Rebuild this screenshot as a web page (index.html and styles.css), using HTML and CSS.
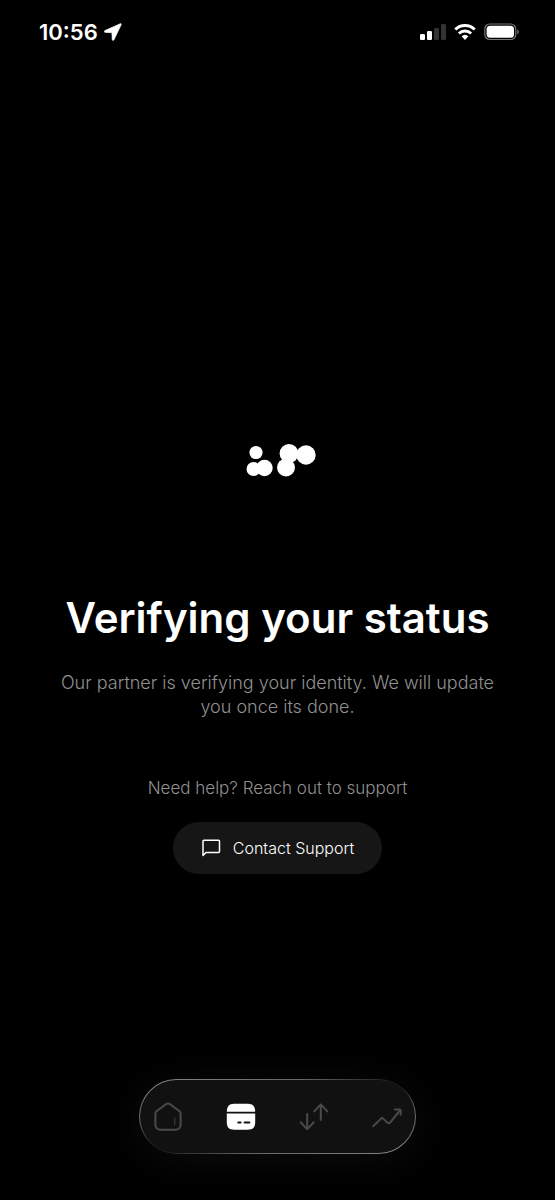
FILE: index.html
```html
<!DOCTYPE html>
<html lang="en">
<head>
  <meta charset="UTF-8">
  <meta name="viewport" content="width=device-width, initial-scale=1">
  <title>Verifying your status</title>
  <link rel="stylesheet" href="styles.css">
</head>
<body>
  <header class="status-bar">
    <div class="time">
      <span>10:56</span>
      <svg width="18" height="18" viewBox="0 0 18 18" fill="#fff" stroke="#fff" stroke-width=".6" aria-hidden="true">
        <path d="M16.2.7.9 7.6c-1 .5-.8 1.700.3 1.800l6.300.3c.3 0 .4.1.4.4l.3 6.400c.1 1.100 1.400 1.300 1.800.3L17.200 1.700c.3-.8-.3-1.300-1-1z"/>
      </svg>
    </div>
    <div class="system">
      <svg width="26" height="18" viewBox="0 0 26 18" aria-hidden="true">
        <rect x="0" y="11" width="5" height="6" rx="1.300" fill="#fff"/>
        <rect x="7" y="8" width="5" height="9" rx="1.300" fill="#fff"/>
        <rect x="14" y="5" width="5" height="12" rx="1.300" fill="#333"/>
        <rect x="21" y="1" width="5" height="16" rx="1.300" fill="#333"/>
      </svg>
      <svg width="22" height="18" viewBox="0 0 22 18" aria-hidden="true">
        <g fill="none" stroke="#fff" stroke-width="3">
          <path d="M1.300 6.500a14 14 0 0 1 19.400 0"/>
          <path d="M4.900 10.500a8.800 8.800 0 0 1 12.200 0"/>
        </g>
        <path d="M7.600 13.300a5 5 0 0 1 6.800 0L11 17z" fill="#fff"/>
      </svg>
      <svg width="36" height="18" viewBox="0 0 36 18" aria-hidden="true">
        <rect x=".8" y="1" width="31" height="15.500" rx="5" fill="none" stroke="#777" stroke-width="1.200"/>
        <rect x="2.600" y="2.800" width="27.400" height="12" rx="3.500" fill="#fff"/>
        <path d="M33.300 6.500c2 .7 2 4 0 4.800z" fill="#777"/>
      </svg>
    </div>
  </header>

  <main class="content">
    <svg class="loader" width="76" height="34" viewBox="-6 0 76 34" fill="#fff" aria-hidden="true">
      <circle cx="10" cy="8.500" r="6.600"/>
      <circle cx="7.500" cy="25" r="7"/>
      <circle cx="18.500" cy="24" r="8.200"/>
      <circle cx="43" cy="9.500" r="9.400"/>
      <circle cx="60" cy="11" r="9.700"/>
      <circle cx="40" cy="23.500" r="9"/>
    </svg>
    <h1>Verifying your status</h1>
    <p class="message">Our partner is verifying your identity. We will update you once its done.</p>
    <p class="help">Need help? Reach out to support</p>
    <button type="button" class="support">
      <svg width="20" height="20" viewBox="0 0 20 20" fill="none" stroke="#fff" stroke-width="1.500" stroke-linejoin="round" aria-hidden="true">
        <path d="M3 2.200h14.500a1 1 0 0 1 1 1v10.300a1 1 0 0 1-1 1H5L2 17.500V3.200a1 1 0 0 1 1-1z"/>
      </svg>
      Contact Support
    </button>
  </main>

  <nav class="tabs">
    <a href="#home" aria-label="Home">
      <svg width="30" height="30" viewBox="0 0 30 30" fill="none" stroke="#4a4a4a" stroke-width="2" stroke-linecap="round" stroke-linejoin="round" aria-hidden="true">
        <path d="M3.500 9.300 12.800 2.300a3.500 3.500 0 0 1 4.400 0l9.300 7c.8.700 1.100 1.400 1.100 2.400v11.300a4.800 4.800 0 0 1-4.800 4.800H7.200a4.800 4.800 0 0 1-4.800-4.800V11.700c0-1 .3-1.700 1.100-2.400z"/>
        <path d="M21.700 16v6.500" stroke="#333" stroke-width="1.500"/>
      </svg>
    </a>
    <a href="#card" aria-label="Card" aria-current="page">
      <svg width="30" height="30" viewBox="0 0 30 30" fill="#fff" aria-hidden="true">
        <path d="M.8 9.800c.2-5.200 2-8 7.200-8h14c5.200 0 7 2.800 7.200 8z"/>
        <path fill-rule="evenodd" d="M.8 11.500h28.400v8.500c0 5.500-2.200 7.700-7.700 7.700h-13C3 27.700.8 25.500.8 20zM12.300 19.400a1 1 0 0 0 0 2h2.300a1 1 0 0 0 0-2zM18.600 19.400a1 1 0 0 0 0 2h4.800a1 1 0 0 0 0-2z"/>
      </svg>
    </a>
    <a href="#transfer" aria-label="Transfer">
      <svg width="30" height="30" viewBox="0 0 30 30" fill="none" stroke="#4a4a4a" stroke-width="2" stroke-linecap="round" stroke-linejoin="round" aria-hidden="true">
        <path d="M8.200 12v15M1.700 20.300l5.800 6.300q.7.700 1.400 0l5.800-6.300"/>
        <path d="M21.800 18V2.600M15.300 9.400l5.800-6.300q.7-.7 1.400 0l5.800 6.300"/>
      </svg>
    </a>
    <a href="#growth" aria-label="Growth">
      <svg width="30" height="30" viewBox="0 0 30 30" fill="none" stroke="#4a4a4a" stroke-width="2" stroke-linecap="round" stroke-linejoin="round" aria-hidden="true">
        <path d="M1.200 24.200 9 16.600q1.100-1 2.200 0l4.400 4.200q1.100 1 2.200 0L28.300 8"/>
        <path d="M22.800 7.400h4.700q1.200 0 1.200 1.200v4.200"/>
      </svg>
    </a>
  </nav>
</body>
</html>
```
FILE: styles.css
```css
* {
  box-sizing: border-box;
}
body {
  margin: 0;
  min-height: 100vh;
  display: flex;
  flex-direction: column;
  align-items: center;
  background: #000;
  color: #fff;
  font-family: Inter, "Liberation Sans", sans-serif;
}
svg {
  display: block;
  flex: none;
}
.status-bar {
  width: 100%;
  height: 64px;
  padding: 0 35px 0 39px;
  display: flex;
  align-items: center;
  justify-content: space-between;
}
.time {
  display: flex;
  align-items: center;
  gap: 6px;
  font-size: 22px;
  font-weight: 600;
}
.system {
  display: flex;
  align-items: center;
  gap: 8px;
}
.content {
  flex: 1;
  width: 100%;
  padding: 0 48px 205px;
  display: flex;
  flex-direction: column;
  align-items: center;
  justify-content: flex-end;
  text-align: center;
}
h1 {
  margin: 112px 0 25px;
  font-size: 42px;
  font-weight: 600;
  line-height: 56px;
}
p {
  margin: 0;
  color: #919191;
  font-size: 17px;
  font-weight: 300;
  line-height: 24px;
}
.message {
  font-size: 18px;
}
.help {
  margin: 57px 0 22px;
}
.support {
  height: 52px;
  padding: 0 28px;
  display: flex;
  align-items: center;
  gap: 12px;
  border: none;
  border-radius: 26px;
  background: #161616;
  color: #fff;
  font-family: inherit;
  font-size: 16px;
  font-weight: 300;
  cursor: pointer;
}
.tabs {
  width: 277px;
  height: 75px;
  margin-bottom: 46px;
  padding: 0 13px;
  display: flex;
  align-items: center;
  justify-content: space-between;
  border: 1px solid transparent;
  border-radius: 38px;
  background:
    linear-gradient(#111, #111) padding-box,
    linear-gradient(to bottom right, #888 0%, #666 30%, #1a1a1a 47%, #1a1a1a 53%, #666 70%, #888 100%) border-box;
  box-shadow: 0 6px 40px rgba(255, 255, 255, 0.05);
}
```
